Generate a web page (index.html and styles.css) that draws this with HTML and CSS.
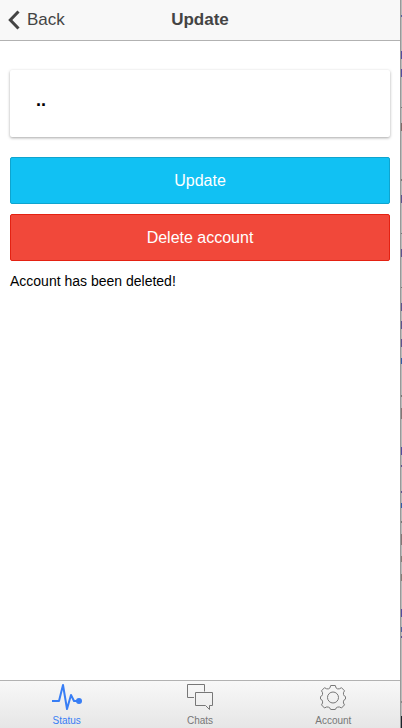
FILE: index.html
```html
<!DOCTYPE html>
<html lang="en">
<head>
<meta charset="utf-8">
<meta name="viewport" content="width=device-width, initial-scale=1">
<title>Update</title>
<link rel="stylesheet" href="styles.css">
</head>
<body>
<div class="app">
  <header class="bar">
    <a class="back" href="#back">
      <svg class="chevron" viewBox="0 0 12 20" aria-hidden="true"><path d="M10.500 1.500 2.300 10l8.200 8.500"/></svg>
      <span>Back</span>
    </a>
    <h1 class="title">Update</h1>
  </header>
  <main class="content">
    <section class="card">..</section>
    <button class="button info" type="button">Update</button>
    <button class="button danger" type="button">Delete account</button>
    <p class="message">Account has been deleted!</p>
  </main>
  <nav class="tabs">
    <a class="tab active" href="#status">
      <svg class="icon" viewBox="0 0 32 28" aria-hidden="true"><path class="pulse" d="M1 18h7L12 2l4 24 4-14 3 6h5"/><circle class="dot" cx="28" cy="18" r="3"/></svg>
      <span>Status</span>
    </a>
    <a class="tab" href="#chats">
      <svg class="icon" viewBox="0 0 32 28" aria-hidden="true"><path d="M10 14.500h-6.500v-13h17v7M11.500 9.500h17v13h-3v4l-4-4h-10z"/></svg>
      <span>Chats</span>
    </a>
    <a class="tab" href="#account">
      <svg class="icon" viewBox="0 0 32 28" aria-hidden="true"><path d="M13.700 2.500h4.600q.3 3 2.300 3.400 1.700.4 3.900-1.200l3 3.100q-1.600 2.100-1 3.700.6 1.900 2 2.100v2.500q-1.500.3-2 2.100-.6 1.700 1 3.700l-3 3.100q-2.200-1.600-3.900-.9-2 .8-2.300 2.400h-4.600q-.3-1.600-2.300-2.400-1.700-.7-3.900.9l-3-3.100q1.600-2 1-3.700-.5-1.800-2-2.100v-2.500q1.400-.2 2-2.100.6-1.600-1-3.700l3-3.100q2.200 1.600 3.900 1.200 2-.4 2.300-3.400z"/><circle cx="16" cy="14.500" r="5.500"/></svg>
      <span>Account</span>
    </a>
  </nav>
</div>
<div class="edge" aria-hidden="true"></div>
</body>
</html>
```
FILE: styles.css
```css
* {
  box-sizing: border-box;
}

body {
  display: flex;
  min-height: 100vh;
  margin: 0;
  background: #fff;
  color: #000;
  font-family: "Liberation Sans", Arial, sans-serif;
}

.app {
  display: flex;
  flex: 1;
  flex-direction: column;
}

.bar {
  display: grid;
  grid-template-columns: 1fr auto 1fr;
  align-items: center;
  padding: 9px 8px;
  border-bottom: 1px solid #b2b2b2;
  background: #f8f8f8;
  color: #444;
}

.back {
  display: flex;
  align-items: center;
  gap: 7px;
  color: inherit;
  font-size: 17px;
  line-height: 22px;
  text-decoration: none;
}

.chevron {
  width: 12px;
  height: 20px;
  fill: none;
  stroke: currentColor;
  stroke-width: 3;
}

.title {
  margin: 0;
  font-size: 17px;
  font-weight: 700;
  line-height: 22px;
}

.content {
  flex: 1;
  padding: 29px 10px 10px;
}

.card {
  margin-bottom: 20px;
  padding: 20px 26px 27px;
  border-radius: 2px;
  box-shadow: 0 1px 3px rgba(0, 0, 0, 0.35);
  font-size: 18px;
  font-weight: 700;
  line-height: 20px;
}

.button {
  display: block;
  width: 100%;
  margin: 0 0 10px;
  padding: 0 12px;
  border: 1px solid;
  border-radius: 2px;
  color: #fff;
  font-family: inherit;
  font-size: 16px;
  line-height: 45px;
}

.info {
  border-color: #0fa4ce;
  background: #11c1f3;
}

.danger {
  border-color: #e42112;
  background: #f1483a;
}

.message {
  margin: 0;
  font-size: 14px;
  line-height: 20px;
}

.tabs {
  display: flex;
  border-top: 1px solid #b2b2b2;
  background: linear-gradient(#f8f8f8, #e6e6e6);
}

.tab {
  display: flex;
  flex: 1;
  flex-direction: column;
  align-items: center;
  gap: 3px;
  padding: 2px 0 1px;
  color: #777;
  font-size: 10px;
  line-height: 13px;
  text-decoration: none;
}

.active {
  color: #387ef5;
}

.icon {
  width: 32px;
  height: 28px;
  fill: none;
  stroke: currentColor;
  stroke-width: 1;
}

.pulse {
  stroke-width: 2;
  stroke-linejoin: round;
}

.dot {
  fill: currentColor;
  stroke: none;
}

/* Sliver of the page behind the app window. */
.edge {
  width: 2px;
  border-left: 1px solid #999;
  background: linear-gradient(
    #bbb 15px, #5560a0 15px 17px, #bbb 17px 51px,
    #534ca0 51px 59px, #bbb 59px 69px, #534ca0 69px 77px, #bbb 77px 107px,
    #777 107px 108px, #bbb 108px 123px, #806a68 123px 131px, #bbb 131px 179px,
    #777 179px 181px, #bbb 181px 195px, #5c5390 195px 203px, #bbb 203px 233px,
    #777 233px 234px, #bbb 234px 249px, #5c5390 249px 257px, #bbb 257px 287px,
    #777 287px 288px, #bbb 288px 303px, #5c5390 303px 311px, #bbb 311px 321px,
    #5c5390 321px 329px, #bbb 329px 339px, #5c5390 339px 347px, #bbb 347px 358px,
    #345caa 358px 364px, #bbb 364px 395px, #777 395px 397px, #bbb 397px 408px,
    #857676 408px 419px, #bbb 419px 447px, #534ca0 447px 455px, #bbb 455px 465px,
    #5c5390 465px 467px, #bbb 467px 491px, #5c5390 491px 493px, #bbb 493px 503px,
    #345caa 503px 508px, #bbb 508px 521px, #777 521px 523px, #bbb 523px 534px,
    #857676 534px 545px, #bbb 545px 556px, #857c76 556px 562px, #bbb 562px 574px,
    #857c76 574px 581px, #bbb 581px 609px, #534ca0 609px 617px, #bbb 617px 627px,
    #5060a0 627px 632px, #bbb 632px 636px, #5c5390 636px 638px, #bbb 638px 701px,
    #888 701px 703px, #bbb 703px 716px, #1c222a 716px);
}
```
